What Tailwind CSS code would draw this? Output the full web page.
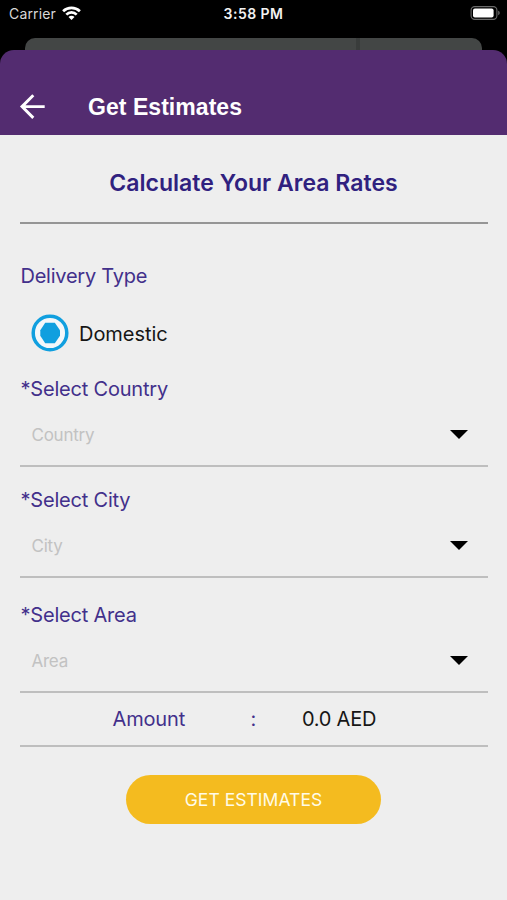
<!DOCTYPE html>
<html lang="en">
<head>
<meta charset="utf-8">
<meta name="viewport" content="width=device-width, initial-scale=1">
<title>Get Estimates</title>
<script src="https://cdn.jsdelivr.net/npm/@tailwindcss/browser@4"></script>
</head>
<body class="bg-black font-['Inter','Liberation_Sans',sans-serif]">
<div class="flex h-[900px] w-[507px] flex-col overflow-hidden bg-black">
  <!-- Status bar -->
  <div class="grid h-[38px] shrink-0 grid-cols-3 items-start text-white">
    <div class="flex h-7 items-center pl-[9px]">
      <span class="text-[14px] leading-7 tracking-[0.15px] text-[#d8d8d8]">Carrier</span>
      <svg class="ml-[6px] -mt-[2px] h-[14px] w-[19px]" viewBox="0 0 19 14" fill="none" stroke="#fff" stroke-width="2.7">
        <path d="M1.1 5.2C5.8 .7 13.2 .7 17.9 5.2"/>
        <path d="M4.3 8.6C7.2 5.7 11.8 5.7 14.7 8.6"/>
        <path d="M9.5 13.9L6.5 10.9C8.1 9.3 10.9 9.3 12.5 10.9Z" fill="#fff" stroke="none"/>
      </svg>
    </div>
    <div class="text-center text-[14px] leading-7 font-semibold tracking-[0.45px] text-[#f2f2f2]">3:58 PM</div>
    <div class="flex justify-end pt-[6px] pr-[6px]">
      <svg class="h-[14px] w-[31px]" viewBox="0 0 31 14" fill="none">
        <rect x="1.1" y=".6" width="25.8" height="12.8" rx="3.6" stroke="#6b6b6b" stroke-width="1.1"/>
        <rect x="3" y="2.5" width="20.6" height="9" rx="1.9" fill="#fff"/>
        <path d="M28.2 4.8C30.2 5.4 30.2 8.6 28.2 9.2Z" fill="#6b6b6b"/>
      </svg>
    </div>
  </div>
  <!-- Edge of the screen behind the sheet -->
  <div class="mx-[25px] flex h-3 shrink-0 overflow-hidden rounded-t-[10px] bg-[#434645]">
    <div class="ml-[331px] h-3 w-1 bg-[#393c3b]"></div>
  </div>
  <!-- Sheet -->
  <header class="flex h-[85px] shrink-0 items-center rounded-t-[14px] bg-[#532c70] pt-7 pl-[19px]">
    <svg class="h-[26px] w-[27px]" viewBox="0 0 27 26" fill="none" stroke="#fff" stroke-width="2.9">
      <path d="M25.7 12.6H3M14.3 1.3L3 12.6L14.3 23.9"/>
    </svg>
    <h1 class="ml-[42px] font-['Liberation_Sans',sans-serif] text-[23px] leading-7 font-bold tracking-[0.05px] text-white">Get Estimates</h1>
  </header>
  <main class="flex grow flex-col bg-[#eeeeee] pr-[19px] pl-5">
    <h2 class="h-[89px] border-b-2 border-[#959595] pt-[32px] pr-px text-center text-[23px] leading-8 font-semibold tracking-[0.03px] text-[#30217f]">Calculate Your Area Rates</h2>
    <div class="mt-[38px] h-7 pl-[0.5px] text-[20px] leading-7 tracking-[-0.25px] text-[#42308b]">Delivery Type</div>
    <div class="mt-[24px] flex h-[38px] items-center pl-[11px]">
      <svg class="h-[38px] w-[38px]" viewBox="0 0 38 38">
        <circle cx="19" cy="19" r="16.8" fill="#f3f7fa" stroke="#109fdf" stroke-width="3.5"/>
        <path d="M14.2 8.8H23.8L29 16.2V21.8L23.8 29.2H14.2L9.3 21.8V16.2Z" fill="#109fdf"/>
      </svg>
      <span class="ml-[10px] pt-[2px] text-[20px] leading-7 tracking-[-0.05px] text-[#161616]">Domestic</span>
    </div>
    <section class="flex h-[115px] flex-col border-b-2 border-[#bebebe] pt-[23px]">
      <label class="pl-[0.5px] text-[20px] leading-7 tracking-[-0.2px] text-[#42308b]">*Select Country</label>
      <div class="mt-[18px] flex h-7 items-center justify-between pr-5 pl-[11.5px]">
        <span class="text-[17px] leading-7 tracking-[-0.25px] text-[#c2c2c2]">Country</span>
        <svg class="-mt-px h-[9px] w-[18px]" viewBox="0 0 18 9"><path d="M0 0H18L9 9Z"/></svg>
      </div>
    </section>
    <section class="flex h-[111px] flex-col border-b-2 border-[#bebebe] pt-[19px]">
      <label class="pl-[0.5px] text-[20px] leading-7 tracking-[-0.2px] text-[#42308b]">*Select City</label>
      <div class="mt-[18px] flex h-7 items-center justify-between pr-5 pl-[11.5px]">
        <span class="text-[17px] leading-7 tracking-[-0.25px] text-[#c2c2c2]">City</span>
        <svg class="-mt-px h-[9px] w-[18px]" viewBox="0 0 18 9"><path d="M0 0H18L9 9Z"/></svg>
      </div>
    </section>
    <section class="flex h-[115px] flex-col border-b-2 border-[#bebebe] pt-[23px]">
      <label class="pl-[0.5px] text-[20px] leading-7 tracking-[-0.2px] text-[#42308b]">*Select Area</label>
      <div class="mt-[18px] flex h-7 items-center justify-between pr-5 pl-[11.5px]">
        <span class="text-[17px] leading-7 tracking-[-0.25px] text-[#c2c2c2]">Area</span>
        <svg class="-mt-px h-[9px] w-[18px]" viewBox="0 0 18 9"><path d="M0 0H18L9 9Z"/></svg>
      </div>
    </section>
    <div class="flex h-[54px] items-center border-b-2 border-[#bebebe] text-[20px] leading-7 tracking-[-0.15px] text-[#42308b]">
      <span class="w-[138px] pl-[92.5px]">Amount</span>
      <span class="ml-[92.5px] w-[51.5px]">:</span>
      <span class="tracking-[-0.25px] text-[#161616]">0.0 AED</span>
    </div>
    <button class="mt-[28px] mr-px h-[49px] w-[255px] self-center rounded-full bg-[#f4bb1f] text-[17.5px] leading-7 tracking-[0.04px] text-[#fffbe8]">GET ESTIMATES</button>
  </main>
</div>
</body>
</html>
